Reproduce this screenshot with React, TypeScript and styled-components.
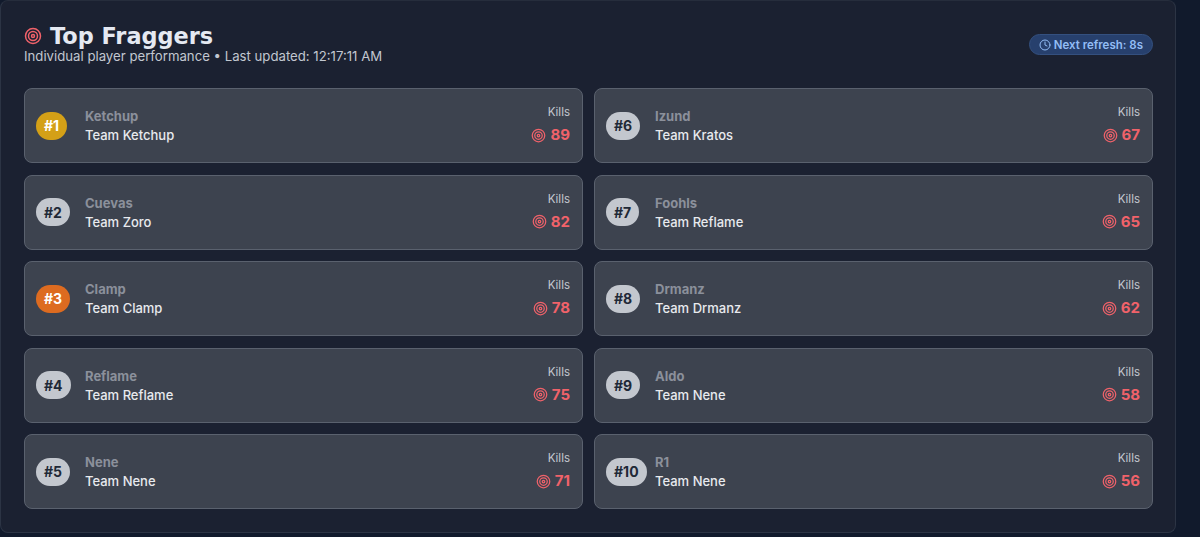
import React from 'react';
import styled, { createGlobalStyle } from 'styled-components';
import { Clock, Target } from 'lucide-react';

interface Player {
  rank: number;
  name: string;
  team: string;
  kills: number;
}

const players: Player[] = [
  { rank: 1, name: 'Ketchup', team: 'Team Ketchup', kills: 89 },
  { rank: 2, name: 'Cuevas', team: 'Team Zoro', kills: 82 },
  { rank: 3, name: 'Clamp', team: 'Team Clamp', kills: 78 },
  { rank: 4, name: 'Reflame', team: 'Team Reflame', kills: 75 },
  { rank: 5, name: 'Nene', team: 'Team Nene', kills: 71 },
  { rank: 6, name: 'Izund', team: 'Team Kratos', kills: 67 },
  { rank: 7, name: 'Foohls', team: 'Team Reflame', kills: 65 },
  { rank: 8, name: 'Drmanz', team: 'Team Drmanz', kills: 62 },
  { rank: 9, name: 'Aldo', team: 'Team Nene', kills: 58 },
  { rank: 10, name: 'R1', team: 'Team Nene', kills: 56 },
];

const GlobalStyle = createGlobalStyle`
  html, body {
    margin: 0;
    height: 537px;
    overflow: hidden;
    background: #111a2c;
    font-family: Inter, "Liberation Sans", sans-serif;
  }
`;

const Panel = styled.div`
  box-sizing: border-box;
  width: 1176px;
  height: 533px;
  padding: 24px 22px 0 23px;
  background: #1b2131;
  border: 1px solid #2c3444;
  border-top-color: #262d3c;
  border-radius: 8px;
`;

const Header = styled.div`
  display: flex;
  justify-content: space-between;
  align-items: flex-start;
  height: 63px;
`;

const TitleBlock = styled.div`
  display: flex;
  flex-direction: column;
`;

const TitleRow = styled.div`
  display: flex;
  align-items: center;
  gap: 8px;
  height: 22px;
`;

const Title = styled.h1`
  margin: 0;
  font-family: "DejaVu Sans", sans-serif;
  font-size: 22.4px;
  line-height: 22px;
  font-weight: 700;
  color: #e5e9f2;
`;

const Subtitle = styled.div`
  margin-top: -1px;
  font-size: 13.2px;
  line-height: 20px;
  color: #c2c7d0;
`;

const RefreshBadge = styled.div`
  display: flex;
  align-items: center;
  gap: 3px;
  box-sizing: border-box;
  height: 21px;
  margin-top: 9px;
  padding: 0 9px;
  border: 1px solid #34507f;
  border-radius: 999px;
  background: #27406d;
  color: #93bdf5;
  font-size: 11.5px;
  font-weight: 600;
`;

const Grid = styled.div`
  display: grid;
  grid-template-columns: 559px 559px;
  grid-template-rows: repeat(5, 75px);
  grid-auto-flow: column;
  column-gap: 11px;
  row-gap: 11.6px;
`;

const Card = styled.div`
  display: flex;
  align-items: center;
  justify-content: space-between;
  box-sizing: border-box;
  padding: 0 12px 0 11px;
  background: #3d434f;
  border: 1px solid #5a616e;
  border-radius: 8px;
`;

const PlayerInfo = styled.div`
  display: flex;
  align-items: center;
`;

const RankSlot = styled.div`
  width: 49px;
  display: flex;
`;

const RankBadge = styled.div<{ $bg: string; $fg: string }>`
  display: flex;
  align-items: center;
  justify-content: center;
  height: 28px;
  padding: 0 8px;
  min-width: 15px;
  border-radius: 999px;
  background: ${(props) => props.$bg};
  color: ${(props) => props.$fg};
  font-size: 14px;
  font-weight: 700;
`;

const Names = styled.div`
  display: flex;
  flex-direction: column;
`;

const Name = styled.div`
  font-size: 13px;
  line-height: 19px;
  font-weight: 700;
  color: #8b909b;
`;

const Team = styled.div`
  font-size: 13px;
  line-height: 18px;
  font-weight: 500;
  color: #e8eaee;
`;

const Stats = styled.div`
  display: flex;
  flex-direction: column;
  align-items: flex-end;
  gap: 3px;
`;

const KillsLabel = styled.div`
  font-size: 11.5px;
  line-height: 16px;
  color: #c4c8cf;
`;

const KillsValue = styled.div`
  display: flex;
  align-items: center;
  gap: 4px;
  font-size: 15px;
  line-height: 24px;
  font-weight: 700;
  color: #f0626a;
`;

const badgeColours = (rank: number) => {
  if (rank === 1) return { $bg: '#d4a017', $fg: '#ffffff' };
  if (rank === 3) return { $bg: '#dd6b20', $fg: '#ffffff' };
  return { $bg: '#c3c7ce', $fg: '#1f2937' };
};

const App: React.FC = () => (
  <>
    <GlobalStyle />
    <Panel>
      <Header>
        <TitleBlock>
          <TitleRow>
            <Target size={18} color="#f0626a" />
            <Title>Top Fraggers</Title>
          </TitleRow>
          <Subtitle>Individual player performance • Last updated: 12:17:11 AM</Subtitle>
        </TitleBlock>
        <RefreshBadge>
          <Clock size={12} />
          Next refresh: 8s
        </RefreshBadge>
      </Header>
      <Grid>
        {players.map((player) => (
          <Card key={player.rank}>
            <PlayerInfo>
              <RankSlot>
                <RankBadge {...badgeColours(player.rank)}>#{player.rank}</RankBadge>
              </RankSlot>
              <Names>
                <Name>{player.name}</Name>
                <Team>{player.team}</Team>
              </Names>
            </PlayerInfo>
            <Stats>
              <KillsLabel>Kills</KillsLabel>
              <KillsValue>
                <Target size={15} />
                {player.kills}
              </KillsValue>
            </Stats>
          </Card>
        ))}
      </Grid>
    </Panel>
  </>
);

export default App;
